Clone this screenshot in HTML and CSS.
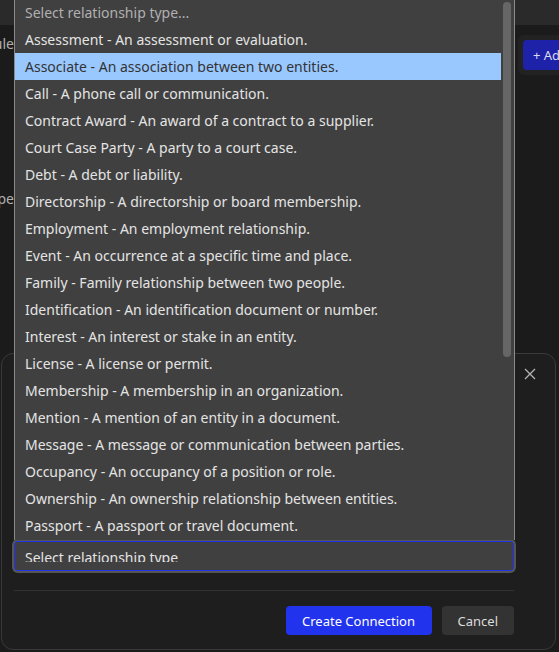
FILE: index.html
```html
<!DOCTYPE html>
<html lang="en">
	<head>
		<meta charset="UTF-8" />
		<meta name="viewport" content="width=device-width, initial-scale=1.0" />
		<title>Create Connection</title>
		<link rel="stylesheet" href="styles.css">
	</head>
	<body>
		<div class="topbar"></div>
		<div class="page">
			<div class="side-labels">
				<div class="side-label label-first"><span>Schedule</span></div>
				<div class="side-label label-second"><span>Type</span></div>
			</div>
			<div class="page-main"></div>
			<div class="toolbar">
				<button class="add-button">+ Add Connection</button>
			</div>
		</div>

		<div class="modal">
			<div class="modal-header">
				<button class="close-button" aria-label="Close">
					<svg width="12" height="12" viewBox="0 0 12 12">
						<path d="M1 1 L11 11 M11 1 L1 11" stroke="#b5b5b5" stroke-width="1.3" fill="none" />
					</svg>
				</button>
			</div>
			<div class="modal-body">
				<div class="select-field">
					<span class="select-value">Select relationship type</span>
				</div>
			</div>
			<div class="modal-footer">
				<button class="button button-primary">Create Connection</button>
				<button class="button button-secondary">Cancel</button>
			</div>
		</div>

		<!-- открытый список select -->
		<div class="option-list">
			<div class="options">
				<div class="option placeholder">Select relationship type...</div>
				<div class="option">Assessment - An assessment or evaluation.</div>
				<div class="option selected">Associate - An association between two entities.</div>
				<div class="option">Call - A phone call or communication.</div>
				<div class="option">Contract Award - An award of a contract to a supplier.</div>
				<div class="option">Court Case Party - A party to a court case.</div>
				<div class="option">Debt - A debt or liability.</div>
				<div class="option">Directorship - A directorship or board membership.</div>
				<div class="option">Employment - An employment relationship.</div>
				<div class="option">Event - An occurrence at a specific time and place.</div>
				<div class="option">Family - Family relationship between two people.</div>
				<div class="option">Identification - An identification document or number.</div>
				<div class="option">Interest - An interest or stake in an entity.</div>
				<div class="option">License - A license or permit.</div>
				<div class="option">Membership - A membership in an organization.</div>
				<div class="option">Mention - A mention of an entity in a document.</div>
				<div class="option">Message - A message or communication between parties.</div>
				<div class="option">Occupancy - An occupancy of a position or role.</div>
				<div class="option">Ownership - An ownership relationship between entities.</div>
				<div class="option">Passport - A passport or travel document.</div>
			</div>
			<div class="scroll-track">
				<div class="scroll-thumb"></div>
			</div>
		</div>
	</body>
</html>
```

FILE: styles.css
```css
:root {
	--page-bg-color: #1b1b1b;
	--topbar-color: #2a2a2a;
	--modal-bg-color: #1e1e1e;
	--modal-border-color: #3a3a3a;
	--list-bg-color: #404040;
	--list-border-color: #8a8a8a;
	--text-color: #e4e4e4;
	--muted-text-color: #b0b0b0;
	--highlight-color: #99c8ff;
	--primary-color: #2233ee;
}
html,
body {
	height: 100%;
}
body {
	font-family: 'Noto Sans', 'Open Sans', sans-serif;
	font-size: 14px;
	margin: 0;
	padding: 0;
	background-color: var(--page-bg-color);
	color: var(--text-color);
	overflow: hidden;
	position: relative;
}
button {
	font-family: inherit;
	font-size: 13px;
}
.topbar {
	height: 25px;
	background-color: var(--topbar-color);
}
.page {
	display: flex;
	height: calc(100% - 25px);
}
.side-labels {
	width: 14px;
	flex-shrink: 0;
}
.side-label {
	display: flex;
	justify-content: flex-end;
	overflow: hidden;
	white-space: nowrap;
	color: var(--muted-text-color);
	line-height: 20px;
}
.label-first {
	margin-top: 9px;
}
.label-second {
	margin-top: 135px;
}
.page-main {
	width: 504px;
	flex-shrink: 0;
}
.toolbar {
	align-self: flex-start;
	margin-top: 10px;
	padding: 5px 0 5px 5px;
	background-color: #222;
	border-radius: 6px 0 0 6px;
	white-space: nowrap;
	overflow: hidden;
}
.add-button {
	display: block;
	height: 30px;
	padding: 0 10px;
	border: none;
	border-radius: 4px;
	background-color: #1e22a8;
	color: #dcdcf0;
	white-space: nowrap;
}
.modal {
	position: absolute;
	left: 1px;
	top: 353px;
	width: 555px;
	height: 297px;
	box-sizing: border-box;
	display: flex;
	flex-direction: column;
	background-color: var(--modal-bg-color);
	border: 1px solid var(--modal-border-color);
	border-radius: 12px;
}
.modal-header {
	display: flex;
	justify-content: flex-end;
	padding: 13px 18px 0 0;
}
.close-button {
	width: 14px;
	height: 14px;
	padding: 1px;
	border: none;
	background: none;
	display: flex;
}
.modal-body {
	flex: 1;
	display: flex;
	flex-direction: column;
	justify-content: flex-end;
	padding: 0 41px 19px 12px;
}
.select-field {
	height: 30px;
	box-sizing: border-box;
	padding: 0 10px;
	border: 1px solid var(--primary-color);
	border-radius: 4px;
	background-color: var(--list-bg-color);
	box-shadow: 0 0 0 2px #555;
}
.select-value {
	display: block;
	height: 20px;
	box-sizing: border-box;
	padding-top: 6px;
	line-height: 20px;
	overflow: hidden;
	color: var(--text-color);
}
.modal-footer {
	display: flex;
	justify-content: flex-end;
	gap: 10px;
	margin: 0 41px 0 12px;
	padding: 15px 0 14px;
	border-top: 1px solid #333;
}
.button {
	height: 29px;
	border: none;
	border-radius: 4px;
	padding: 0 16px;
}
.button-primary {
	min-width: 146px;
	background-color: var(--primary-color);
	color: #fff;
}
.button-secondary {
	min-width: 71px;
	background-color: #333;
	color: #ddd;
}
.option-list {
	position: absolute;
	left: 14px;
	top: -1px;
	width: 501px;
	height: 541px;
	box-sizing: border-box;
	display: flex;
	background-color: var(--list-bg-color);
	border-left: 1px solid var(--list-border-color);
	border-right: 1px solid var(--list-border-color);
}
.options {
	flex: 1;
}
.option {
	height: 27px;
	line-height: 27px;
	padding-left: 10px;
	white-space: nowrap;
	overflow: hidden;
}
.placeholder {
	color: var(--muted-text-color);
}
.selected {
	background-color: var(--highlight-color);
	color: #333;
}
.scroll-track {
	width: 13px;
	padding: 3px 3px 0 2px;
	box-sizing: border-box;
}
.scroll-thumb {
	height: 355px;
	background-color: #666;
	border-radius: 4px;
}
```
